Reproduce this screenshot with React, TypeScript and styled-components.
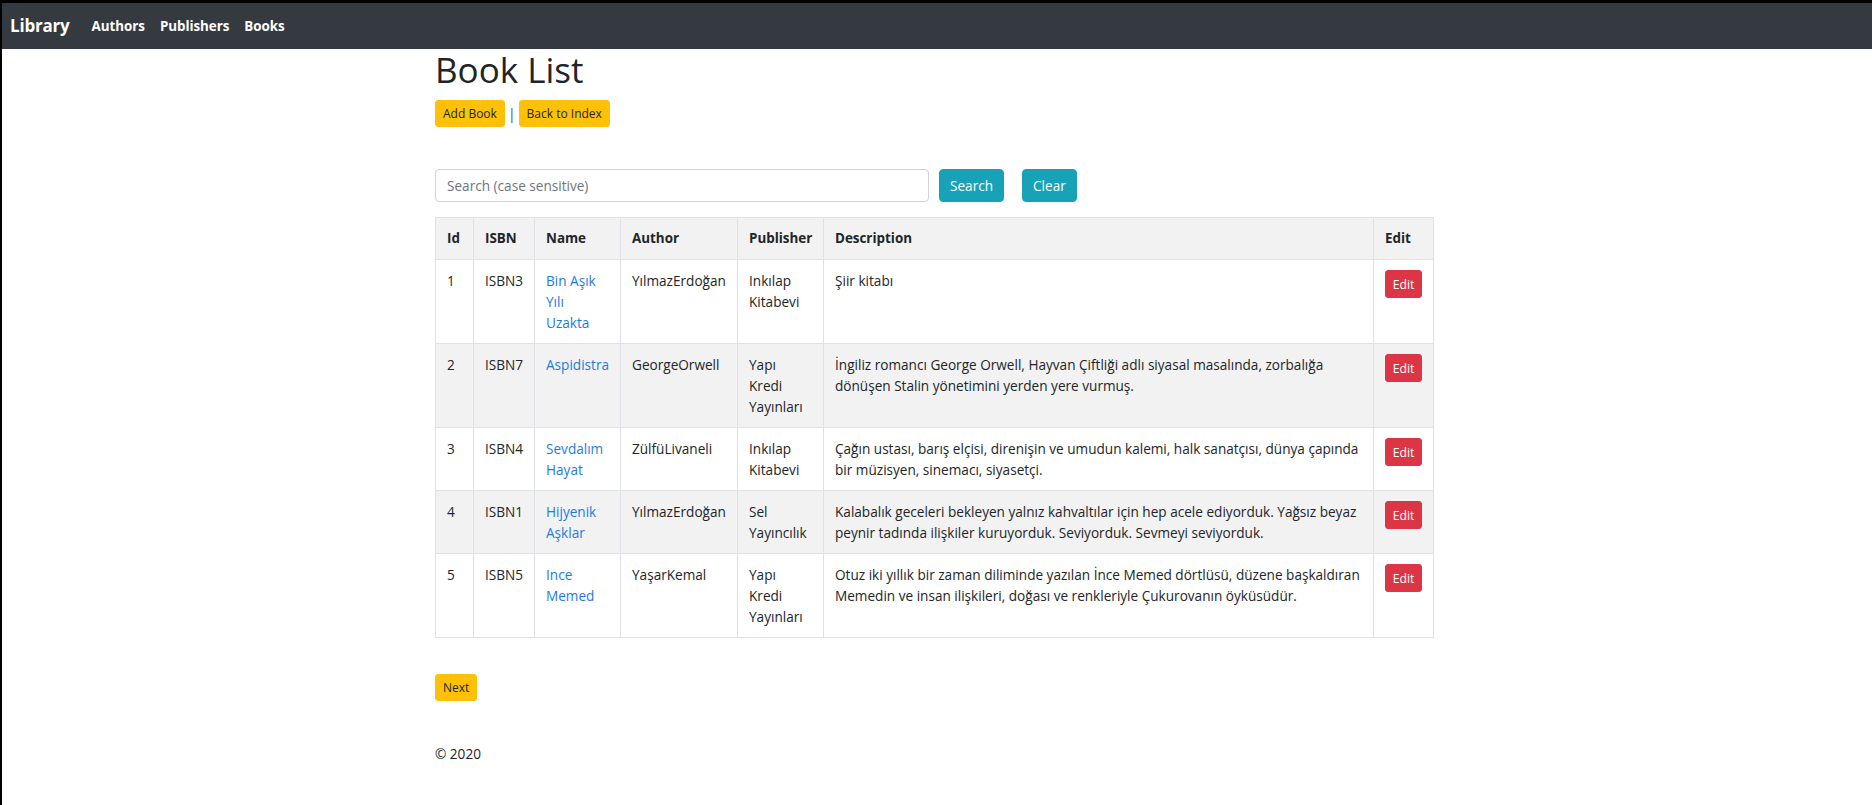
import React from "react";
import styled, { createGlobalStyle } from "styled-components";

const GlobalStyle = createGlobalStyle`
  html, body {
    margin: 0;
    padding: 0;
    background: #ffffff;
  }
  body {
    font-family: "Open Sans", "Noto Sans", "Liberation Sans", sans-serif;
    font-size: 13.6px;
    line-height: 21px;
    color: #212529;
  }
  * { box-sizing: border-box; }
`;

const Frame = styled.div`
  min-height: 100vh;
  border-top: 3px solid #000;
  border-left: 2px solid #000;
  background: #fff;
`;

const NavBar = styled.nav`
  height: 46px;
  background: #343a40;
  display: flex;
  align-items: center;
  padding-left: 8px;
`;

const Brand = styled.a`
  color: #fff;
  font-weight: 700;
  font-size: 17px;
  line-height: 24px;
  margin-right: 22px;
  text-decoration: none;
  letter-spacing: -0.2px;
`;

const NavLinks = styled.div`
  display: flex;
  gap: 15px;
`;

const NavLink = styled.a`
  color: #fff;
  font-weight: 700;
  font-size: 13.4px;
  text-decoration: none;
  letter-spacing: -0.05px;
`;

const Container = styled.main`
  width: 1004px;
  margin: 0 auto;
`;

const Title = styled.h1`
  margin: 0 0 9px;
  font-size: 35px;
  line-height: 42px;
  font-weight: 500;
  color: #212529;
`;

const ActionRow = styled.div`
  display: flex;
  align-items: center;
  gap: 3px;
`;

const Button = styled.button<{ $tone: "warning" | "info" | "danger" }>`
  border: 1px solid
    ${(p) => (p.$tone === "warning" ? "#ffc107" : p.$tone === "info" ? "#17a2b8" : "#dc3545")};
  background: ${(p) => (p.$tone === "warning" ? "#ffc107" : p.$tone === "info" ? "#17a2b8" : "#dc3545")};
  color: ${(p) => (p.$tone === "warning" ? "#212529" : "#ffffff")};
  font-family: inherit;
  border-radius: 3px;
  cursor: pointer;
  padding: 0;
  display: inline-flex;
  align-items: center;
  justify-content: center;
`;

const SmallButton = styled(Button)`
  height: 27px;
  padding: 0 7px;
  font-size: 12px;
`;

const Divider = styled.span`
  color: #495057;
  font-size: 14px;
`;

const SearchRow = styled.form`
  display: flex;
  align-items: center;
  margin-top: 42px;
`;

const SearchInput = styled.input`
  width: 494px;
  height: 33px;
  border: 1px solid #ced4da;
  border-radius: 4px;
  padding: 0 11px;
  font-family: inherit;
  font-size: 13.6px;
  color: #495057;
  &::placeholder {
    color: #6c757d;
  }
`;

const SearchButton = styled(Button)<{ $gap: number }>`
  height: 33px;
  margin-left: ${(p) => p.$gap}px;
  padding: 0 10px;
  font-size: 13.6px;
  border-radius: 4px;
`;

const Table = styled.table`
  margin-top: 15px;
  width: 998px;
  border-collapse: collapse;
  table-layout: fixed;
  border: 1px solid #dee2e6;
`;

const Th = styled.th`
  text-align: left;
  font-weight: 700;
  padding: 10px 11px;
  border: 1px solid #dee2e6;
  background: #f2f2f2;
  vertical-align: top;
  font-size: 13.4px;
`;

const Row = styled.tr`
  &:nth-child(even) {
    background: #f2f2f2;
  }
`;

const Td = styled.td`
  padding: 10px 11px;
  border: 1px solid #dee2e6;
  vertical-align: top;
  white-space: nowrap;
`;

const NameLink = styled.a`
  color: #1f7ae0;
  text-decoration: none;
`;

const EditButton = styled(Button)`
  height: 28px;
  width: 37px;
  font-size: 12.2px;
`;

const NextRow = styled.div`
  margin-top: 36px;
`;

const Footer = styled.footer`
  margin-top: 42px;
  font-size: 13.6px;
`;

type Book = {
  id: number;
  isbn: string;
  name: string[];
  author: string;
  publisher: string[];
  description: string[];
};

const books: Book[] = [
  {
    id: 1,
    isbn: "ISBN3",
    name: ["Bin Aşık", "Yılı", "Uzakta"],
    author: "YılmazErdoğan",
    publisher: ["Inkılap", "Kitabevi"],
    description: ["Şiir kitabı"],
  },
  {
    id: 2,
    isbn: "ISBN7",
    name: ["Aspidistra"],
    author: "GeorgeOrwell",
    publisher: ["Yapı", "Kredi", "Yayınları"],
    description: [
      "İngiliz romancı George Orwell, Hayvan Çiftliği adlı siyasal masalında, zorbalığa",
      "dönüşen Stalin yönetimini yerden yere vurmuş.",
    ],
  },
  {
    id: 3,
    isbn: "ISBN4",
    name: ["Sevdalım", "Hayat"],
    author: "ZülfüLivaneli",
    publisher: ["Inkılap", "Kitabevi"],
    description: [
      "Çağın ustası, barış elçisi, direnişin ve umudun kalemi, halk sanatçısı, dünya çapında",
      "bir müzisyen, sinemacı, siyasetçi.",
    ],
  },
  {
    id: 4,
    isbn: "ISBN1",
    name: ["Hijyenik", "Aşklar"],
    author: "YılmazErdoğan",
    publisher: ["Sel", "Yayıncılık"],
    description: [
      "Kalabalık geceleri bekleyen yalnız kahvaltılar için hep acele ediyorduk. Yağsız beyaz",
      "peynir tadında ilişkiler kuruyorduk. Seviyorduk. Sevmeyi seviyorduk.",
    ],
  },
  {
    id: 5,
    isbn: "ISBN5",
    name: ["Ince", "Memed"],
    author: "YaşarKemal",
    publisher: ["Yapı", "Kredi", "Yayınları"],
    description: [
      "Otuz iki yıllık bir zaman diliminde yazılan İnce Memed dörtlüsü, düzene başkaldıran",
      "Memedin ve insan ilişkileri, doğası ve renkleriyle Çukurovanın öyküsüdür.",
    ],
  },
];

const columnWidths = [38, 61, 86, 117, 86, 550, 60];

function Lines({ lines }: { lines: string[] }) {
  return (
    <>
      {lines.map((line, i) => (
        <React.Fragment key={i}>
          {i > 0 && <br />}
          {line}
        </React.Fragment>
      ))}
    </>
  );
}

export default function App() {
  return (
    <>
      <GlobalStyle />
      <Frame>
        <NavBar>
          <Brand href="#">Library</Brand>
          <NavLinks>
            <NavLink href="#">Authors</NavLink>
            <NavLink href="#">Publishers</NavLink>
            <NavLink href="#">Books</NavLink>
          </NavLinks>
        </NavBar>
        <Container>
          <Title>Book List</Title>
          <ActionRow>
            <SmallButton $tone="warning">Add Book</SmallButton>
            <Divider>|</Divider>
            <SmallButton $tone="warning">Back to Index</SmallButton>
          </ActionRow>
          <SearchRow onSubmit={(e) => e.preventDefault()}>
            <SearchInput placeholder="Search (case sensitive)" />
            <SearchButton $tone="info" $gap={10} type="submit">
              Search
            </SearchButton>
            <SearchButton $tone="info" $gap={18} type="button">
              Clear
            </SearchButton>
          </SearchRow>
          <Table>
            <colgroup>
              {columnWidths.map((w, i) => (
                <col key={i} style={{ width: w }} />
              ))}
            </colgroup>
            <thead>
              <tr>
                <Th>Id</Th>
                <Th>ISBN</Th>
                <Th>Name</Th>
                <Th>Author</Th>
                <Th>Publisher</Th>
                <Th>Description</Th>
                <Th>Edit</Th>
              </tr>
            </thead>
            <tbody>
              {books.map((b) => (
                <Row key={b.id}>
                  <Td>{b.id}</Td>
                  <Td>{b.isbn}</Td>
                  <Td>
                    <NameLink href="#">
                      <Lines lines={b.name} />
                    </NameLink>
                  </Td>
                  <Td>{b.author}</Td>
                  <Td>
                    <Lines lines={b.publisher} />
                  </Td>
                  <Td>
                    <Lines lines={b.description} />
                  </Td>
                  <Td>
                    <EditButton $tone="danger">Edit</EditButton>
                  </Td>
                </Row>
              ))}
            </tbody>
          </Table>
          <NextRow>
            <SmallButton $tone="warning">Next</SmallButton>
          </NextRow>
          <Footer>© 2020</Footer>
        </Container>
      </Frame>
    </>
  );
}
